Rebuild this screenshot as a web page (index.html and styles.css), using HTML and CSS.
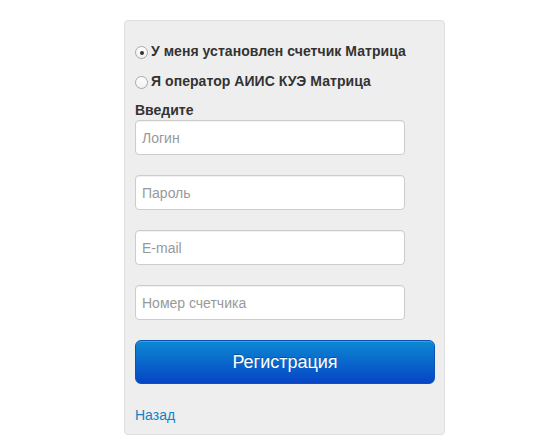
FILE: index.html
```html
<!DOCTYPE html>
<html lang="ru">
<head>
<meta charset="utf-8">
<title>Регистрация</title>
<link rel="stylesheet" href="styles.css">
</head>
<body>
<form class="well">
  <label class="choice"><span class="radio checked"></span>У меня установлен счетчик Матрица</label>
  <label class="choice"><span class="radio"></span>Я оператор АИИС КУЭ Матрица</label>
  <div class="caption">Введите</div>
  <input class="field" type="text" placeholder="Логин">
  <input class="field" type="password" placeholder="Пароль">
  <input class="field" type="text" placeholder="E-mail">
  <input class="field" type="text" placeholder="Номер счетчика">
  <button class="btn-primary" type="button">Регистрация</button>
  <a class="back" href="#">Назад</a>
</form>
</body>
</html>
```

FILE: styles.css
```css
html, body {
  margin: 0;
  padding: 0;
  background: #ffffff;
}

body {
  font-family: "Liberation Sans", Arial, sans-serif;
  font-size: 14px;
  line-height: 20px;
  color: #333333;
}

.well {
  display: flex;
  flex-direction: column;
  align-items: flex-start;
  box-sizing: border-box;
  width: 321px;
  margin: 20px 0 0 124px;
  padding: 20px 10px 9px 10px;
  background: #eeeeee;
  border: 1px solid #dedede;
  border-radius: 4px;
}

.choice {
  display: block;
  font-weight: bold;
  line-height: 20px;
  margin-bottom: 10px;
  color: #333333;
  white-space: nowrap;
  letter-spacing: 0.05px;
}

.radio {
  display: inline-block;
  box-sizing: border-box;
  width: 13px;
  height: 13px;
  margin-right: 3px;
  border: 1px solid #a8a8a8;
  border-radius: 50%;
  background: linear-gradient(#ffffff, #f0f0f0);
  vertical-align: -3px;
  position: relative;
}

.radio.checked::after {
  content: "";
  position: absolute;
  left: 3.5px;
  top: 3.5px;
  width: 4px;
  height: 4px;
  border-radius: 50%;
  background: #333333;
}

.caption {
  font-weight: bold;
  line-height: 19px;
}

.field {
  box-sizing: border-box;
  width: 270px;
  height: 35px;
  margin: 0 0 20px 0;
  padding: 4px 6px;
  font-family: "Liberation Sans", Arial, sans-serif;
  font-size: 14px;
  color: #555555;
  background: #ffffff;
  border: 1px solid #cccccc;
  border-radius: 4px;
  box-shadow: inset 0 1px 1px rgba(0, 0, 0, 0.06);
  outline: none;
}

.field::placeholder {
  color: #999999;
}

.btn-primary {
  box-sizing: border-box;
  width: 300px;
  height: 44px;
  margin: 0 0 21px 0;
  padding: 0;
  font-family: "Liberation Sans", Arial, sans-serif;
  font-size: 18px;
  color: #ffffff;
  background: linear-gradient(#0c89d2, #0745c6);
  border: 1px solid #0a52b5;
  border-radius: 6px;
  box-shadow: inset 0 1px 0 rgba(255, 255, 255, 0.2);
  text-shadow: 0 -1px 0 rgba(0, 0, 0, 0.25);
  cursor: pointer;
}

.back {
  display: block;
  color: #1182c4;
  text-decoration: none;
  line-height: 20px;
}
```
